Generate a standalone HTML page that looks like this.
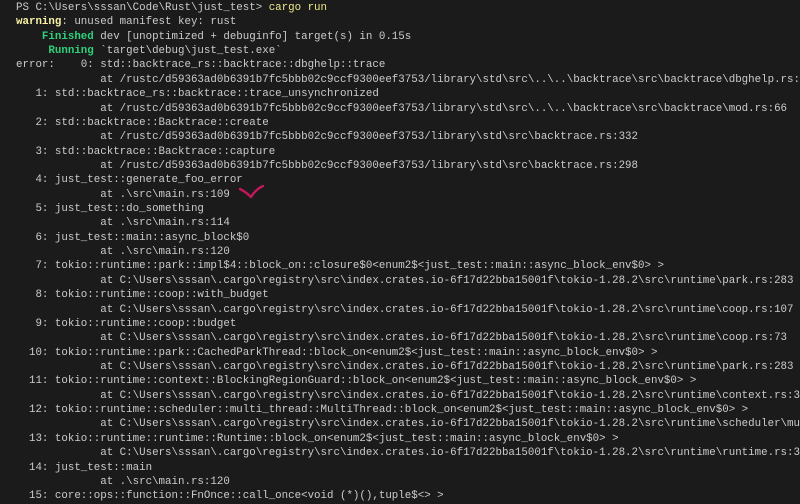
<!DOCTYPE html>
<html><head><meta charset="utf-8"><style>
html,body{margin:0;padding:0;background:#1b1b1b;width:800px;height:503px;overflow:hidden}
pre{margin:0;position:absolute;left:16px;top:1px;font-family:"Liberation Mono",monospace;font-size:10.8px;line-height:14.36px;color:#cccccc;white-space:pre}
.y{color:#f0e98a}.yb{color:#f9f1a5;font-weight:bold}.g{color:#2fd17a;font-weight:bold}
svg{position:absolute;left:0;top:0}
</style></head><body>
<pre>PS C:\Users\sssan\Code\Rust\just_test&gt; <span class="y">cargo run</span>
<span class="yb">warning</span>: unused manifest key: rust
    <span class="g">Finished</span> dev [unoptimized + debuginfo] target(s) in 0.15s
     <span class="g">Running</span> `target\debug\just_test.exe`
error:    0: std::backtrace_rs::backtrace::dbghelp::trace
             at /rustc/d59363ad0b6391b7fc5bbb02c9ccf9300eef3753/library\std\src\..\..\backtrace\src\backtrace\dbghelp.rs:
   1: std::backtrace_rs::backtrace::trace_unsynchronized
             at /rustc/d59363ad0b6391b7fc5bbb02c9ccf9300eef3753/library\std\src\..\..\backtrace\src\backtrace\mod.rs:66
   2: std::backtrace::Backtrace::create
             at /rustc/d59363ad0b6391b7fc5bbb02c9ccf9300eef3753/library\std\src\backtrace.rs:332
   3: std::backtrace::Backtrace::capture
             at /rustc/d59363ad0b6391b7fc5bbb02c9ccf9300eef3753/library\std\src\backtrace.rs:298
   4: just_test::generate_foo_error
             at .\src\main.rs:109
   5: just_test::do_something
             at .\src\main.rs:114
   6: just_test::main::async_block$0
             at .\src\main.rs:120
   7: tokio::runtime::park::impl$4::block_on::closure$0&lt;enum2$&lt;just_test::main::async_block_env$0&gt; &gt;
             at C:\Users\sssan\.cargo\registry\src\index.crates.io-6f17d22bba15001f\tokio-1.28.2\src\runtime\park.rs:283
   8: tokio::runtime::coop::with_budget
             at C:\Users\sssan\.cargo\registry\src\index.crates.io-6f17d22bba15001f\tokio-1.28.2\src\runtime\coop.rs:107
   9: tokio::runtime::coop::budget
             at C:\Users\sssan\.cargo\registry\src\index.crates.io-6f17d22bba15001f\tokio-1.28.2\src\runtime\coop.rs:73
  10: tokio::runtime::park::CachedParkThread::block_on&lt;enum2$&lt;just_test::main::async_block_env$0&gt; &gt;
             at C:\Users\sssan\.cargo\registry\src\index.crates.io-6f17d22bba15001f\tokio-1.28.2\src\runtime\park.rs:283
  11: tokio::runtime::context::BlockingRegionGuard::block_on&lt;enum2$&lt;just_test::main::async_block_env$0&gt; &gt;
             at C:\Users\sssan\.cargo\registry\src\index.crates.io-6f17d22bba15001f\tokio-1.28.2\src\runtime\context.rs:3
  12: tokio::runtime::scheduler::multi_thread::MultiThread::block_on&lt;enum2$&lt;just_test::main::async_block_env$0&gt; &gt;
             at C:\Users\sssan\.cargo\registry\src\index.crates.io-6f17d22bba15001f\tokio-1.28.2\src\runtime\scheduler\mu
  13: tokio::runtime::runtime::Runtime::block_on&lt;enum2$&lt;just_test::main::async_block_env$0&gt; &gt;
             at C:\Users\sssan\.cargo\registry\src\index.crates.io-6f17d22bba15001f\tokio-1.28.2\src\runtime\runtime.rs:3
  14: just_test::main
             at .\src\main.rs:120
  15: core::ops::function::FnOnce::call_once&lt;void (*)(),tuple$&lt;&gt; &gt;</pre>
<svg width="800" height="503"><path d="M240 189 Q246 192 251 197 Q256 189 263 186" fill="none" stroke="#c2185b" stroke-width="2.4" stroke-linecap="round" stroke-linejoin="round"/></svg>
</body></html>
